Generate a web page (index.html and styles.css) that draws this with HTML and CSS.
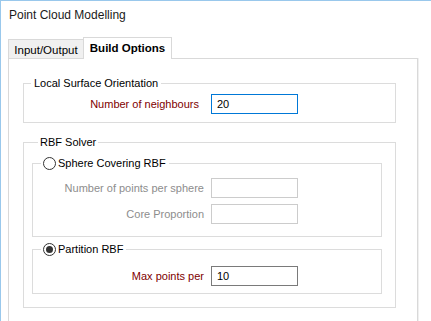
FILE: index.html
```html
<!DOCTYPE html>
<html lang="en">
<head>
    <meta charset="UTF-8">
    <title>Point Cloud Modelling</title>
    <link rel="stylesheet" href="styles.css">
</head>
<body>

<div class="window">
    <div class="title">Point Cloud Modelling</div>

    <div class="tabs">
        <div class="tab">Input/Output</div>
        <div class="tab active">Build Options</div>
    </div>

    <div class="panel">
        <fieldset class="group group-local">
            <legend>Local Surface Orientation</legend>
            <div class="row">
                <label class="label req">Number of neighbours</label>
                <div class="input focus">20</div>
            </div>
        </fieldset>

        <fieldset class="group group-rbf">
            <legend>RBF Solver</legend>

            <fieldset class="sub sub-sphere">
                <legend><span class="radio"></span>Sphere Covering RBF</legend>
                <div class="row">
                    <label class="label off">Number of points per sphere</label>
                    <div class="input disabled"></div>
                </div>
                <div class="row">
                    <label class="label off">Core Proportion</label>
                    <div class="input disabled"></div>
                </div>
            </fieldset>

            <fieldset class="sub sub-partition">
                <legend><span class="radio checked"></span>Partition RBF</legend>
                <div class="row">
                    <label class="label req">Max points per</label>
                    <div class="input">10</div>
                </div>
            </fieldset>
        </fieldset>
    </div>
</div>

</body>
</html>
```

FILE: styles.css
```css
body {
    margin: 0;
    padding: 0;
    background: #fff;
    font-family: 'Liberation Sans', Arial, sans-serif;
    font-size: 11px;
    color: #000;
    white-space: nowrap;
}

.window {
    height: 320px;
    border-top: 1px solid #99c8ec;
    border-left: 1px solid #99c8ec;
    overflow: hidden;
}

.title {
    padding: 6px 8px 0;
    line-height: 16px;
    font-size: 12px;
    color: #1a1a1a;
}

/* Tabs */
.tabs {
    display: flex;
    align-items: flex-end;
    margin: 14px 0 -1px 7px;
}

.tab {
    height: 20px;
    line-height: 20px;
    width: 75px;
    box-sizing: border-box;
    text-align: center;
    font-size: 11.5px;
    background: #f0f0f0;
    border: 1px solid #d9d9d9;
    border-right: none;
}

.tab.active {
    position: relative;
    z-index: 1;
    height: 22px;
    line-height: 21px;
    width: 89px;
    background: #fff;
    font-weight: bold;
    border-right: 1px solid #d9d9d9;
    border-bottom: none;
}

.panel {
    width: 410px;
    height: 300px;
    box-sizing: border-box;
    margin-left: 7px;
    padding: 16px 21px 0 14px;
    border: 1px solid #d9d9d9;
    box-shadow: 1px 0 0 #f0f0f0;
}

/* Group boxes */
fieldset {
    margin: 0;
    border: 1px solid #dcdcdc;
    min-width: 0;
}

legend {
    line-height: 16px;
    padding: 0 3px;
}

.group {
    padding: 3px 0 8px 0;
}

.group-local legend {
    margin-left: 7px;
}

.group-rbf {
    margin-top: 11px;
    padding: 5px 13px 13px 8px;
}

.group-rbf > legend {
    margin-left: 6px;
    padding: 0 2px;
}

.sub legend {
    display: flex;
    align-items: center;
    margin-left: 8px;
    padding: 0 3px 0 2px;
}

.sub-sphere {
    padding: 7px 0 12px 0;
}

.sub-partition {
    margin-top: 4px;
    padding: 9px 0 7px 0;
}

.radio {
    width: 13px;
    height: 13px;
    box-sizing: border-box;
    border: 1px solid #333;
    border-radius: 50%;
    background: #fff;
    margin-right: 2px;
    display: flex;
    align-items: center;
    justify-content: center;
}

.radio.checked::after {
    content: "";
    width: 7px;
    height: 7px;
    border-radius: 50%;
    background: #333;
}

/* Rows */
.row {
    display: flex;
    align-items: center;
}

.row + .row {
    margin-top: 6px;
}

.label {
    width: 171px;
    margin-right: 7px;
    text-align: right;
}

.group-local .label {
    width: 175px;
    margin-right: 12px;
}

.label.req {
    color: #800000;
}

.label.off {
    color: #8d8d8d;
}

.input {
    width: 87px;
    height: 20px;
    box-sizing: border-box;
    border: 1px solid #7a7a7a;
    padding: 0 5px;
    line-height: 18px;
    background: #fff;
}

.input.focus {
    border-color: #0078d7;
}

.input.disabled {
    border-color: #cccccc;
}
```
